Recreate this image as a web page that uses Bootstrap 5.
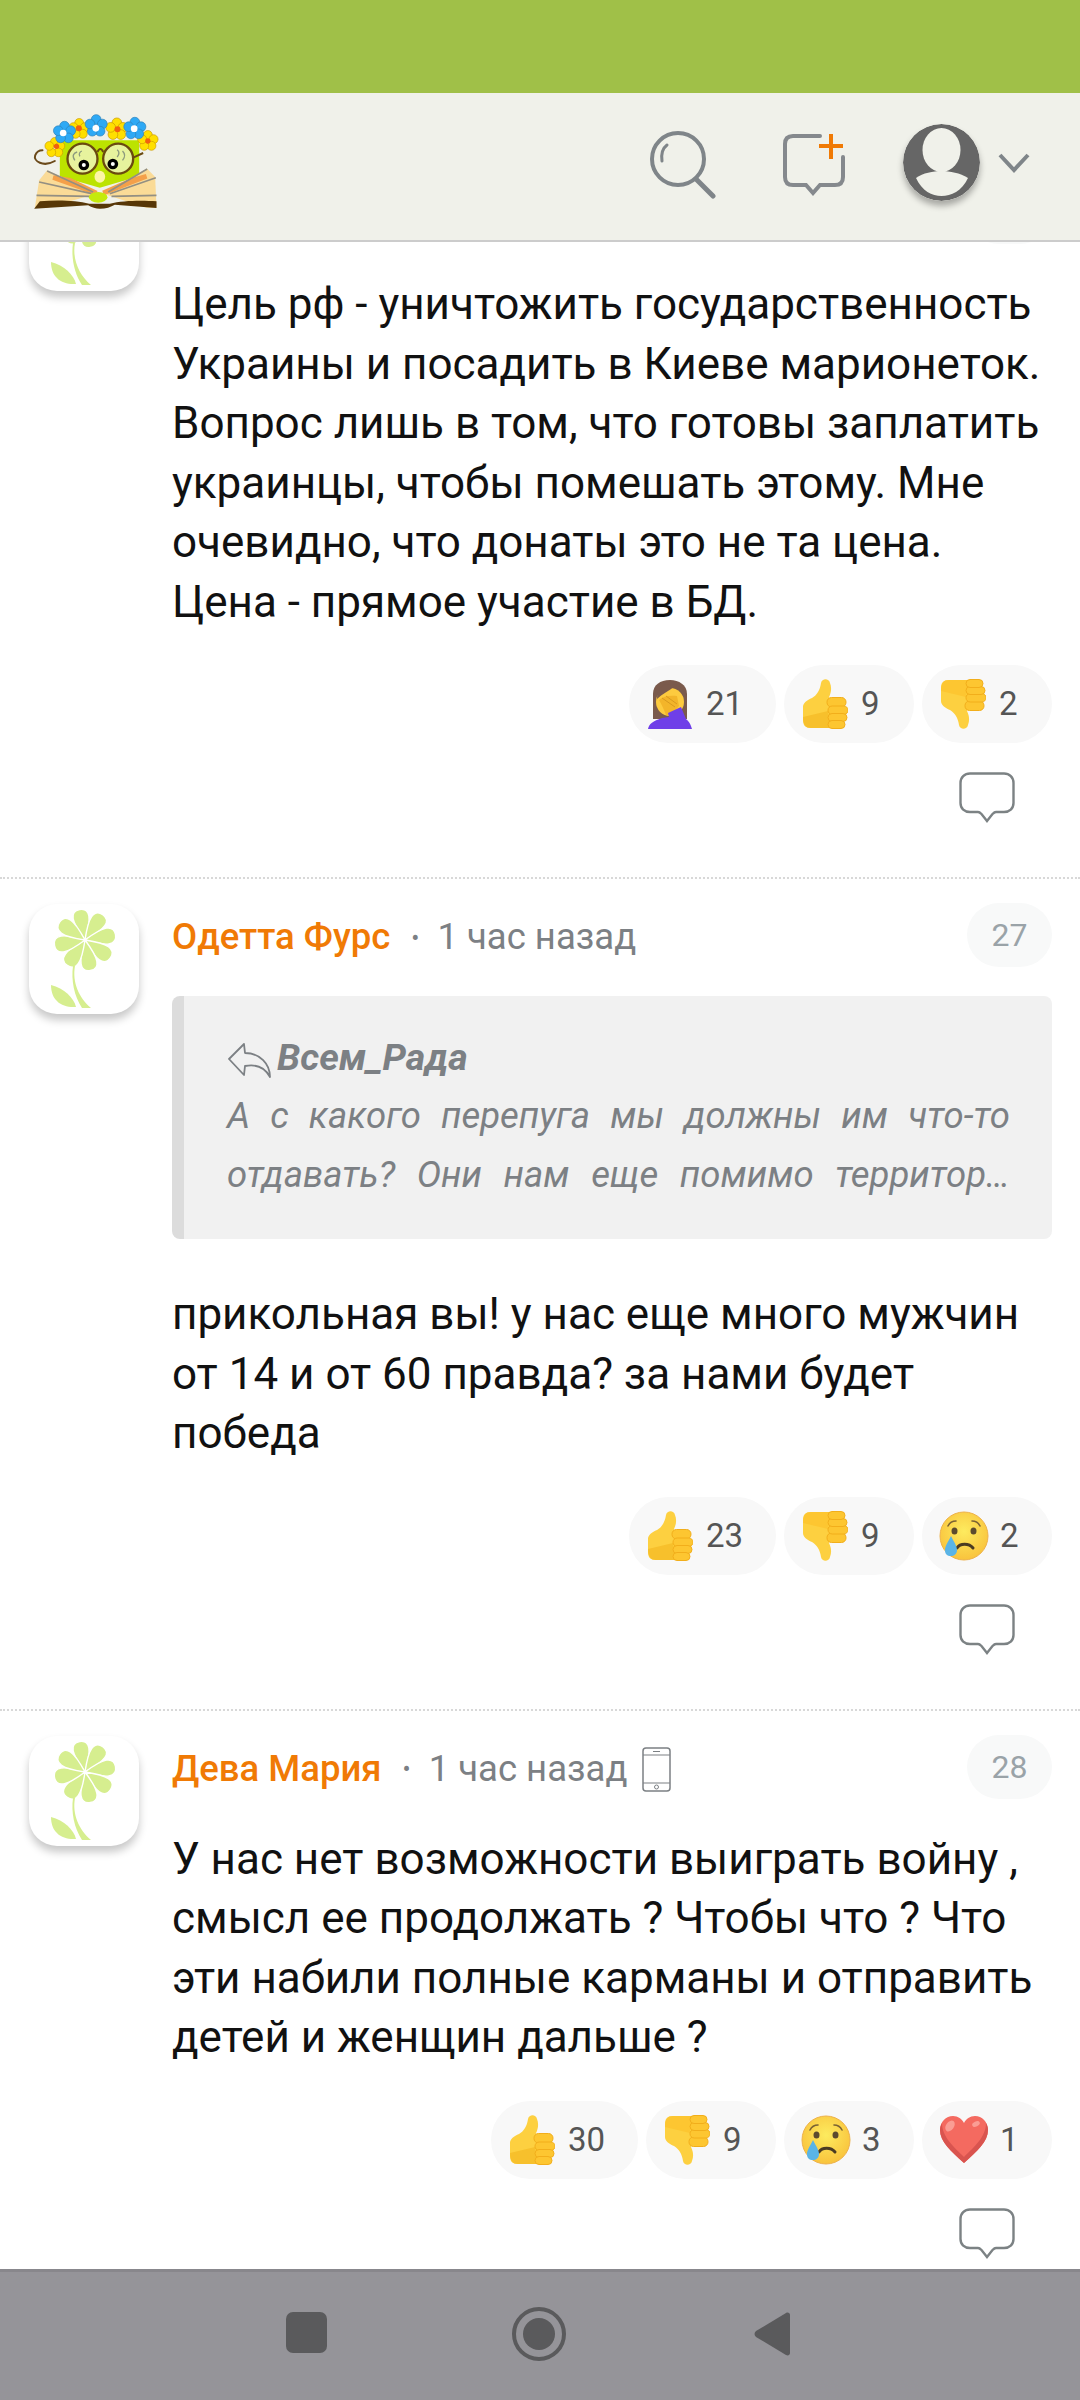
<!DOCTYPE html>
<html lang="ru">
<head>
    <meta charset="UTF-8">
    <meta name="viewport" content="width=device-width, initial-scale=1.0">
    <title>Комментарии</title>
    <link href="https://cdn.jsdelivr.net/npm/bootstrap@5.3.3/dist/css/bootstrap.min.css" rel="stylesheet">
    <style>
        html, body { width: 1080px; height: 2400px; overflow: hidden; }
        body { font-family: Roboto, "Liberation Sans", sans-serif; background: #fff; color: #111; }
        .page-shell { height: 2400px; }
        .status-strip { height: 93px; background: #a0c048; flex: none; }
        .site-head { height: 149px; background: #f0f1ea; border-bottom: 2px solid #ccc; flex: none; position: relative; z-index: 2; padding: 19px 50px 0 33px; }
        .head-tools { margin-top: 12px; }
        .tool-search { margin-right: 66px; margin-top: 7px; }
        .tool-add { margin-right: 57px; margin-top: 9px; }
        .user-pic { width: 77px; height: 77px; border-radius: 50%; box-shadow: 0 5px 6px rgba(0,0,0,.3); }
        .tool-chev { margin-left: 18px; margin-top: 29px; }
        .feed { flex: 1 1 auto; min-height: 0; overflow: hidden; }
        .cmt { padding: 25px 28px 54px 29px; border-bottom: 2px dotted #d8d8d8; }
        .cmt-first { margin-top: -86px; }
        .ava-box { width: 110px; height: 110px; border-radius: 28px; background: #fff; box-shadow: 0 6px 8px rgba(0,0,0,.22); flex: none; margin-right: 33px; }
        .cmt-main { min-width: 0; }
        .cmt-top { height: 62px; margin-bottom: 32px; font-size: 36.500px; color: #7c8084; }
        .who-line { margin-top: 5px; }
        .who { font-weight: 500; color: #f07a05; }
        .sep-dot { font-size: 24px; margin: 0 18px 0 21px; }
        .dev-ico { margin-left: 15px; }
        .num-pill { width: 85px; height: 64px; border-radius: 32px; background: #f8f9f9; color: #9aa3a8; font-size: 32px; }
        .quote-box { height: 243px; margin: -2px 0 46px; padding: 38px 42px 0 43px; background: #f1f1f1; border-left: 12px solid #dcdcdc; border-radius: 8px; color: #7c8084; font-style: italic; font-size: 36.500px; line-height: 59px; }
        .quote-who { font-weight: 700; font-size: 37.500px; line-height: 46px; margin-bottom: 6px; }
        .quote-who svg { margin-right: 6px; vertical-align: -8px; }
        .quote-line { text-align: justify; text-align-last: justify; white-space: nowrap; }
        .cmt-text { font-size: 44px; line-height: 59.5px; margin: 0 0 33px; }
        .react-row { gap: 8px; }
        .react-pill { height: 78px; min-width: 130px; padding: 0 33px 0 18px; border-radius: 39px; background: #f8f8f8; color: #555; font-size: 33px; }
        .react-pill svg { margin-right: 13px; flex: none; }
        .react-pill .emo-round { margin: 0 11px 0 -1px; }
        .reply-ico { margin: 29px 37px 0 0; }
        .android-nav { height: 131px; background: #959499; border-top: 3px solid #88878c; flex: none; position: relative; z-index: 2; }
        .nav-square { position: absolute; left: 286px; top: 40px; }
        .nav-circle { position: absolute; left: 512px; top: 35px; }
        .nav-back { position: absolute; left: 753px; top: 39px; }
    </style>
</head>
<body>
    <svg width="0" height="0" class="position-absolute">
        <defs>
            <radialGradient id="faceGrad" cx="50%" cy="40%" r="60%">
                <stop offset="0" stop-color="#fdeb5f"/><stop offset="1" stop-color="#f9c33c"/>
            </radialGradient>
            <symbol id="thumb-up" viewBox="0 0 46 50">
                <path d="M1 28C1 24 5 21 10 19C15 16 18 11 19 4C20-1 27-1 28 4C30 9 29 14 27 18L31 49L9 49C3 49 1 46 1 41Z" fill="#fdd040"/>
                <path d="M1 38C1 46 4 49 9 49H28L26 32Z" fill="#f7c02c"/>
                <g fill="#fdc631" stroke="#f2ae1b" stroke-width="1">
                    <rect x="25" y="18.500" width="19" height="9.500" rx="4.500"/>
                    <rect x="26" y="27" width="20" height="8.500" rx="4.200"/>
                    <rect x="26" y="34.500" width="19" height="8" rx="4"/>
                    <rect x="26" y="41.500" width="17" height="8" rx="4"/>
                </g>
            </symbol>
            <symbol id="thumb-down" viewBox="0 0 46 50">
                <g transform="matrix(1 0 0 -1 0 50)">
                    <path d="M1 28C1 24 5 21 10 19C15 16 18 11 19 4C20-1 27-1 28 4C30 9 29 14 27 18L31 49L9 49C3 49 1 46 1 41Z" fill="#fdd040"/>
                    <path d="M1 38C1 46 4 49 9 49H28L26 32Z" fill="#fdc631"/>
                    <g fill="#fdc631" stroke="#f2ae1b" stroke-width="1">
                        <rect x="25" y="18.500" width="19" height="9.500" rx="4.500"/>
                        <rect x="26" y="27" width="20" height="8.500" rx="4.200"/>
                        <rect x="26" y="34.500" width="19" height="8" rx="4"/>
                        <rect x="26" y="41.500" width="17" height="8" rx="4"/>
                    </g>
                </g>
            </symbol>
            <symbol id="cry-face" viewBox="0 0 50 50">
                <circle cx="25" cy="25" r="24" fill="url(#faceGrad)" stroke="#eeb24a" stroke-width="1"/>
                <ellipse cx="15.500" cy="20" rx="3" ry="3.600" fill="#5c4a2e"/>
                <ellipse cx="34.500" cy="20" rx="3" ry="3.600" fill="#5c4a2e"/>
                <path d="M9 15C11 11 14 10 17 10M41 15C39 11 36 10 33 10" fill="none" stroke="#7a6233" stroke-width="1.600" stroke-linecap="round"/>
                <path d="M18 37C21 32 30 32 34 37" fill="none" stroke="#4b3b22" stroke-width="3" stroke-linecap="round"/>
                <path d="M12 25C15 31 18 35 18 39C18 43 15 45 12 45C8 45 6 43 6 39C6 35 9 31 12 25Z" fill="#5ab4e6"/>
            </symbol>
            <symbol id="red-heart" viewBox="0 0 50 50">
                <path d="M25 48C12 36 1 27 1 15C1 7 7 1 14 1C19 1 23 4 25 8C27 4 31 1 36 1C43 1 49 7 49 15C49 27 38 36 25 48Z" fill="#f46a60"/>
                <path d="M25 48C38 36 49 27 49 15C49 12 48 10 47 8C47 22 35 32 25 42C15 32 3 22 3 8C2 10 1 12 1 15C1 27 12 36 25 48Z" fill="#d9544f"/>
                <ellipse cx="11" cy="11" rx="4" ry="6" transform="rotate(35 11 11)" fill="#fa9d94"/>
                <ellipse cx="37" cy="9" rx="4" ry="2.500" transform="rotate(-25 37 9)" fill="#fa9d94"/>
            </symbol>
            <symbol id="face-palm" viewBox="0 0 44 50">
                <path d="M5 40V15C5 6 12 1 22 1C31 1 39 6 39 15V40Z" fill="#7a5a4c"/>
                <ellipse cx="22" cy="23" rx="14" ry="14" fill="#fdcb3f"/>
                <path d="M9 20C14 15 21 12 27 7C31 10 34 14 36 18V12C33 7 28 5 22 5C14 5 9 11 9 20Z" fill="#7a5a4c"/>
                <path d="M11 21C15 17 22 16 29 17L31 27L22 37L18 36C16 31 14 26 11 21Z" fill="#f3b52a"/>
                <path d="M14 19L27 28M18 17L29 25" stroke="#d99a1e" stroke-width="1"/>
                <path d="M0 50C1 45 5 42 14 39L21 38L20 34L33 28L38 40C42 43 43 47 44 50Z" fill="#6f3fe8"/>
            </symbol>
            <symbol id="reply-bubble" viewBox="0 0 56 51">
                <path d="M11 1.500H45C50.500 1.500 54.500 5.500 54.500 11V31C54.500 36.500 50.500 40 45 40H37C35.500 40 34.500 41 33.500 42L28 49L22.500 42C21.500 41 20.500 40 19 40H11C5.500 40 1.500 36.500 1.500 31V11C1.500 5.500 5.500 1.500 11 1.500Z" fill="none" stroke="#7c8284" stroke-width="2.400"/>
            </symbol>
            <path id="petal" d="M56 36C52 28 48 20 48 13C48 8 51 5 56 5C61 5 64 8 64 13C64 20 60 28 56 36Z"/>
            <symbol id="daisy" viewBox="0 0 110 110">
                <g fill="#d6ee8f" stroke="#fff" stroke-width="1.400">
                    <use href="#petal" transform="rotate(-10 56 36)"/>
                    <use href="#petal" transform="rotate(35 56 36)"/>
                    <use href="#petal" transform="rotate(80 56 36)"/>
                    <use href="#petal" transform="rotate(125 56 36)"/>
                    <use href="#petal" transform="rotate(170 56 36)"/>
                    <use href="#petal" transform="rotate(215 56 36)"/>
                    <use href="#petal" transform="rotate(260 56 36)"/>
                    <use href="#petal" transform="rotate(305 56 36)"/>
                </g>
                <g fill="#d6ee8f">
                    <path d="M46 62C43 78 50 94 62 104H53C45 92 42 76 44 62Z"/>
                    <path d="M22 81C35 84 45 94 47 103C32 104 22 96 22 81Z"/>
                </g>
            </symbol>
            <symbol id="wreath-bloom" viewBox="-40 -40 80 80">
                <circle cx="0" cy="-20" r="15"/><circle cx="19" cy="-6" r="15"/><circle cx="12" cy="16" r="15"/><circle cx="-12" cy="16" r="15"/><circle cx="-19" cy="-6" r="15"/>
            </symbol>
        </defs>
    </svg>

    <div class="page-shell d-flex flex-column">
        <div class="status-strip"></div>

        <header class="site-head d-flex justify-content-between">
            <svg width="127" height="100" viewBox="100 125 380 300">
                <path d="M165 272C130 292 100 272 106 255C110 245 120 240 128 240" fill="none" stroke="#6b4a1a" stroke-width="6" stroke-linecap="round"/>
                <path d="M180 210H418V318L300 352L180 318Z" fill="#bce300"/>
                <path d="M105 412L118 330L142 300L290 370L142 412Z" fill="#fadb97"/>
                <path d="M470 412L466 320L442 295L310 370L440 412Z" fill="#fadb97"/>
                <path d="M160 322L290 368L210 330ZM440 318L310 368L395 330Z" fill="#f4a04a" stroke="#f4a04a" stroke-width="14"/>
                <g stroke="#938f82" stroke-width="5" fill="none">
                    <path d="M142 302L280 365M118 335L275 370M110 375L270 378"/>
                    <path d="M442 296L325 365M468 322L330 370M470 375L335 378"/>
                </g>
                <path d="M103 415L120 393C170 388 230 390 268 400H330C370 390 430 390 470 393V413L345 403C325 415 290 422 265 405Z" fill="#573707"/>
                <ellipse cx="295" cy="381" rx="28" ry="16" fill="#c4ea0c"/>
                <ellipse cx="300" cy="319" rx="16" ry="18" fill="#fdf5a6"/>
                <circle cx="248" cy="265" r="45" fill="#e7f39d" stroke="#6a4a10" stroke-width="7"/>
                <circle cx="355" cy="265" r="45" fill="#e7f39d" stroke="#6a4a10" stroke-width="7"/>
                <path d="M293 245C298 233 305 233 310 245" fill="none" stroke="#6a4a10" stroke-width="6"/>
                <path d="M400 262L430 248" stroke="#6a4a10" stroke-width="6"/>
                <path d="M225 270C215 255 222 248 232 245M240 258C236 250 240 245 246 242M352 260C360 250 358 243 352 238M368 270C378 258 374 248 368 242" fill="none" stroke="#8d9b7e" stroke-width="4"/>
                <circle cx="252" cy="284" r="16" fill="#000"/><circle cx="252" cy="284" r="6" fill="#fff"/>
                <circle cx="339" cy="281" r="16" fill="#000"/><circle cx="339" cy="281" r="6" fill="#fff"/>
                <use href="#wreath-bloom" x="130" y="197" width="70" height="70" fill="#ffdf00" stroke="#c79400" stroke-width="2"/>
                <use href="#wreath-bloom" x="408" y="176" width="72" height="72" fill="#ffdf00" stroke="#c79400" stroke-width="2"/>
                <use href="#wreath-bloom" x="202" y="140" width="72" height="72" fill="#ffdf00" stroke="#c79400" stroke-width="2"/>
                <use href="#wreath-bloom" x="312" y="138" width="78" height="78" fill="#ffdf00" stroke="#c79400" stroke-width="2"/>
                <use href="#wreath-bloom" x="155" y="148" width="78" height="78" fill="#2ea9f5" stroke="#2e7fb5" stroke-width="2"/>
                <use href="#wreath-bloom" x="250" y="128" width="78" height="78" fill="#2ea9f5" stroke="#2e7fb5" stroke-width="2"/>
                <use href="#wreath-bloom" x="366" y="136" width="78" height="78" fill="#2ea9f5" stroke="#2e7fb5" stroke-width="2"/>
                <circle cx="170" cy="228" r="8" fill="#f2600f"/><circle cx="237" cy="174" r="9" fill="#f2600f"/>
                <circle cx="353" cy="177" r="9" fill="#f2600f"/><circle cx="444" cy="212" r="8" fill="#f2600f"/>
                <circle cx="190" cy="188" r="10" fill="#fff"/><circle cx="288" cy="174" r="10" fill="#fff"/><circle cx="403" cy="175" r="10" fill="#fff"/>
            </svg>
            <div class="head-tools d-flex align-items-start">
                <svg class="tool-search" width="66" height="68" viewBox="0 0 66 68">
                    <circle cx="28" cy="28" r="26" fill="none" stroke="#7f8589" stroke-width="4"/>
                    <path d="M46 48L63 65" stroke="#7f8589" stroke-width="5" stroke-linecap="round"/>
                    <path d="M12 30C11 23 13 17 17 14" fill="none" stroke="#7f8589" stroke-width="3" stroke-linecap="round"/>
                </svg>
                <svg class="tool-add" width="64" height="63" viewBox="0 0 64 63">
                    <path d="M38 3H11C5 3 3 6 3 11V44C3 49 5 52 11 52H24L31 60L38 52H53C59 52 61 49 61 44V24" fill="none" stroke="#85898d" stroke-width="4" stroke-linecap="round"/>
                    <path d="M49 1V26M37 13H61" stroke="#f07a05" stroke-width="4"/>
                </svg>
                <svg class="user-pic" viewBox="0 0 77 77">
                    <circle cx="38.500" cy="38.500" r="38.500" fill="#666"/>
                    <ellipse cx="38.500" cy="26" rx="19" ry="22" fill="#f0f1ea"/>
                    <path d="M13 54C20 49 30 47 38.500 47C47 47 57 49 65 54C59 67 48 72 38.500 72C29 72 19 67 13 54Z" fill="#f0f1ea"/>
                </svg>
                <svg class="tool-chev" width="32" height="20" viewBox="0 0 32 20">
                    <path d="M2 2L16 17L30 2" fill="none" stroke="#7f8589" stroke-width="4"/>
                </svg>
            </div>
        </header>

        <main class="feed">
            <article class="cmt cmt-first d-flex">
                <div class="ava-box"><svg width="110" height="110"><use href="#daisy"/></svg></div>
                <div class="cmt-main flex-grow-1">
                    <div class="cmt-top d-flex align-items-center">
                        <span class="num-pill ms-auto"></span>
                    </div>
                    <p class="cmt-text">Цель рф - уничтожить государственность Украины и посадить в Киеве марионеток. Вопрос лишь в том, что готовы заплатить украинцы, чтобы помешать этому. Мне очевидно, что донаты это не та цена. Цена - прямое участие в БД.</p>
                    <div class="react-row d-flex justify-content-end">
                        <span class="react-pill d-flex align-items-center"><svg width="46" height="50"><use href="#face-palm"/></svg>21</span>
                        <span class="react-pill d-flex align-items-center"><svg width="46" height="50"><use href="#thumb-up"/></svg>9</span>
                        <span class="react-pill d-flex align-items-center"><svg width="46" height="50"><use href="#thumb-down"/></svg>2</span>
                    </div>
                    <div class="d-flex justify-content-end"><svg class="reply-ico" width="56" height="51"><use href="#reply-bubble"/></svg></div>
                </div>
            </article>

            <article class="cmt d-flex">
                <div class="ava-box"><svg width="110" height="110"><use href="#daisy"/></svg></div>
                <div class="cmt-main flex-grow-1">
                    <div class="cmt-top d-flex align-items-center">
                        <div class="who-line d-flex align-items-center">
                            <span class="who">Одетта Фурс</span><span class="sep-dot">•</span><span>1 час назад</span>
                        </div>
                        <span class="num-pill d-flex align-items-center justify-content-center ms-auto">27</span>
                    </div>
                    <div class="quote-box">
                        <div class="quote-who"><svg width="44" height="36" viewBox="0 0 44 36"><path d="M17 2L2 17L17 33L18 24C28 22 37 24 43 35C43 22 33 11 18 11Z" fill="none" stroke="#7c8084" stroke-width="1.800" stroke-linejoin="round"/></svg>Всем_Рада</div>
                        <div class="quote-line">А с какого перепуга мы должны им что-то</div>
                        <div class="quote-line">отдавать? Они нам еще помимо территор…</div>
                    </div>
                    <p class="cmt-text">прикольная вы! у нас еще много мужчин от 14 и от 60 правда? за нами будет победа</p>
                    <div class="react-row d-flex justify-content-end">
                        <span class="react-pill d-flex align-items-center"><svg width="46" height="50"><use href="#thumb-up"/></svg>23</span>
                        <span class="react-pill d-flex align-items-center"><svg width="46" height="50"><use href="#thumb-down"/></svg>9</span>
                        <span class="react-pill d-flex align-items-center"><svg class="emo-round" width="50" height="50"><use href="#cry-face"/></svg>2</span>
                    </div>
                    <div class="d-flex justify-content-end"><svg class="reply-ico" width="56" height="51"><use href="#reply-bubble"/></svg></div>
                </div>
            </article>

            <article class="cmt d-flex">
                <div class="ava-box"><svg width="110" height="110"><use href="#daisy"/></svg></div>
                <div class="cmt-main flex-grow-1">
                    <div class="cmt-top d-flex align-items-center">
                        <div class="who-line d-flex align-items-center">
                            <span class="who">Дева Мария</span><span class="sep-dot">•</span><span>1 час назад</span>
                            <svg class="dev-ico" width="29" height="45" viewBox="0 0 29 45"><rect x="1" y="1" width="27" height="43" rx="3" fill="none" stroke="#7c8084" stroke-width="1.500"/><path d="M1 8H28M1 36H28" stroke="#7c8084" stroke-width="1.200"/><circle cx="14.500" cy="40" r="2" fill="none" stroke="#7c8084"/><path d="M11 4.500H18" stroke="#7c8084"/></svg>
                        </div>
                        <span class="num-pill d-flex align-items-center justify-content-center ms-auto">28</span>
                    </div>
                    <p class="cmt-text">У нас нет возможности выиграть войну , смысл ее продолжать ? Чтобы что ? Что эти набили полные карманы и отправить детей и женщин дальше ?</p>
                    <div class="react-row d-flex justify-content-end">
                        <span class="react-pill d-flex align-items-center"><svg width="46" height="50"><use href="#thumb-up"/></svg>30</span>
                        <span class="react-pill d-flex align-items-center"><svg width="46" height="50"><use href="#thumb-down"/></svg>9</span>
                        <span class="react-pill d-flex align-items-center"><svg class="emo-round" width="50" height="50"><use href="#cry-face"/></svg>3</span>
                        <span class="react-pill d-flex align-items-center"><svg class="emo-round" width="50" height="50"><use href="#red-heart"/></svg>1</span>
                    </div>
                    <div class="d-flex justify-content-end"><svg class="reply-ico" width="56" height="51"><use href="#reply-bubble"/></svg></div>
                </div>
            </article>
        </main>

        <nav class="android-nav">
            <svg class="nav-square" width="41" height="41"><rect width="41" height="41" rx="7" fill="#5a5a5c"/></svg>
            <svg class="nav-circle" width="54" height="54"><circle cx="27" cy="27" r="25" fill="none" stroke="#5a5a5c" stroke-width="4"/><circle cx="27" cy="27" r="16" fill="#5a5a5c"/></svg>
            <svg class="nav-back" width="37" height="46" viewBox="0 0 37 46"><path d="M33 2L3 20C1 22 1 24 3 26L33 44C35 45 37 44 37 42V4C37 2 35 1 33 2Z" fill="#5a5a5c"/></svg>
        </nav>
    </div>
</body>
</html>
